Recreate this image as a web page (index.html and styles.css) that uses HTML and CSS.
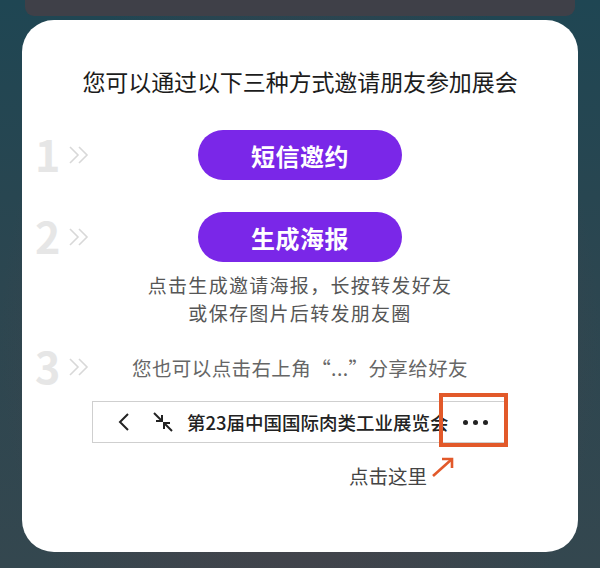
FILE: index.html
```html
<!DOCTYPE html>
<html lang="zh-CN">
<head>
    <meta charset="UTF-8">
    <meta name="viewport" content="width=device-width, initial-scale=1.0">
    <title>邀请朋友参加展会</title>
    <link rel="stylesheet" href="styles.css">
</head>
<body>
    <div class="backdrop-card"></div>

    <div class="invite-card">
        <h1 class="invite-title">您可以通过以下三种方式邀请朋友参加展会</h1>

        <div class="step step-one">
            <div class="step-mark">
                <span class="step-num">1</span>
                <svg class="step-arrows" width="22" height="20" viewBox="0 0 22 20">
                    <polyline points="2,2 10,10 2,18" />
                    <polyline points="11,2 19,10 11,18" />
                </svg>
            </div>
            <button class="invite-btn">短信邀约</button>
        </div>

        <div class="step step-two">
            <div class="step-mark">
                <span class="step-num">2</span>
                <svg class="step-arrows" width="22" height="20" viewBox="0 0 22 20">
                    <polyline points="2,2 10,10 2,18" />
                    <polyline points="11,2 19,10 11,18" />
                </svg>
            </div>
            <button class="invite-btn">生成海报</button>
        </div>
        <p class="step-desc">点击生成邀请海报，长按转发好友<br>或保存图片后转发朋友圈</p>

        <div class="step step-three">
            <div class="step-mark">
                <span class="step-num">3</span>
                <svg class="step-arrows" width="22" height="20" viewBox="0 0 22 20">
                    <polyline points="2,2 10,10 2,18" />
                    <polyline points="11,2 19,10 11,18" />
                </svg>
            </div>
            <p class="step-text">您也可以点击右上角“...”分享给好友</p>
        </div>

        <div class="mock-bar">
            <svg class="bar-back" width="14" height="20" viewBox="0 0 14 20">
                <polyline points="11,2 3,10 11,18" />
            </svg>
            <svg class="bar-shrink" width="20" height="20" viewBox="0 0 20 20">
                <line x1="1" y1="1" x2="9" y2="9" />
                <polyline points="3,9 9,9 9,3" />
                <line x1="19" y1="19" x2="11" y2="11" />
                <polyline points="17,11 11,11 11,17" />
            </svg>
            <span class="bar-title">第23届中国国际肉类工业展览会</span>
            <span class="bar-more"><i></i><i></i><i></i></span>
            <div class="highlight-box"></div>
        </div>

        <div class="hint">
            <span class="hint-text">点击这里</span>
            <svg class="hint-arrow" width="24" height="22" viewBox="0 0 24 22">
                <line x1="2" y1="20" x2="21" y2="3" />
                <polyline points="11,3 21,3 21,12" />
            </svg>
        </div>
    </div>
</body>
</html>
```

FILE: styles.css
```css
body {
    margin: 0;
    width: 600px;
    height: 568px;
    overflow: hidden;
    background:
        radial-gradient(ellipse 300px 420px at 50% 60%, rgba(82, 64, 70, 0.9), rgba(82, 64, 70, 0) 100%),
        linear-gradient(180deg, #1f4653 0%, #2c4650 50%, #34474f 100%);
    font-family: "Noto Sans CJK SC", "Noto Sans", sans-serif;
}
.backdrop-card {
    margin: 0 25px;
    height: 16px;
    background: #3f4048;
    border-radius: 0 0 9px 9px;
}
.invite-card {
    position: relative;
    margin: 4px 22px 0;
    height: 532px;
    box-sizing: border-box;
    padding-top: 46px;
    background: #fff;
    border-radius: 32px;
}
.invite-title {
    margin: 0;
    font-size: 23px;
    line-height: 30px;
    font-weight: 400;
    color: #1c1c1c;
    text-align: center;
    letter-spacing: -0.1px;
}
.step {
    display: grid;
    grid-template-columns: 1fr auto 1fr;
    align-items: center;
}
.step-one {
    margin-top: 34px;
}
.step-two {
    margin-top: 32px;
}
.step-three {
    margin-top: 21px;
    height: 40px;
}
.step-mark {
    display: flex;
    align-items: center;
    gap: 8px;
    padding-left: 13px;
}
.step-num {
    margin-top: -5px;
    font-size: 43px;
    line-height: 40px;
    font-weight: 700;
    color: #e6e6e6;
}
.step-arrows polyline {
    fill: none;
    stroke: #d8d8d8;
    stroke-width: 1.6;
}
.invite-btn {
    width: 204px;
    height: 50px;
    border: none;
    border-radius: 25px;
    background: #7a27e8;
    color: #fff;
    font-family: inherit;
    font-size: 24px;
    font-weight: 700;
    letter-spacing: 0.5px;
}
.step-desc {
    margin: 9px 0 0;
    font-size: 19px;
    line-height: 27.5px;
    letter-spacing: 1.3px;
    color: #565656;
    text-align: center;
}
.step-text {
    margin: 0;
    font-size: 19.5px;
    letter-spacing: 0.4px;
    color: #666;
    white-space: nowrap;
}
.mock-bar {
    position: relative;
    display: flex;
    align-items: center;
    margin: 14px 0 0 70px;
    width: 414px;
    height: 42px;
    box-sizing: border-box;
    border: 1px solid #cfcfcf;
    padding-left: 24px;
}
.bar-back polyline,
.bar-shrink line,
.bar-shrink polyline {
    fill: none;
    stroke: #222;
    stroke-width: 2;
}
.bar-shrink {
    margin-left: 22px;
}
.bar-title {
    margin-left: 14px;
    font-size: 18.5px;
    font-weight: 500;
    color: #222;
    white-space: nowrap;
}
.bar-more {
    display: flex;
    gap: 5px;
    margin-left: 14px;
}
.bar-more i {
    width: 5px;
    height: 5px;
    border-radius: 50%;
    background: #222;
}
.highlight-box {
    position: absolute;
    left: 346px;
    top: -9px;
    width: 69px;
    height: 54px;
    box-sizing: border-box;
    border: 4px solid #e2592a;
}
.hint {
    display: flex;
    align-items: center;
    gap: 4px;
    margin-top: 20px;
    padding-left: 327px;
}
.hint-text {
    font-size: 19.5px;
    line-height: 26px;
    color: #444;
}
.hint-arrow {
    margin-top: -18px;
}
.hint-arrow line,
.hint-arrow polyline {
    fill: none;
    stroke: #e2592a;
    stroke-width: 2.6;
}
```
